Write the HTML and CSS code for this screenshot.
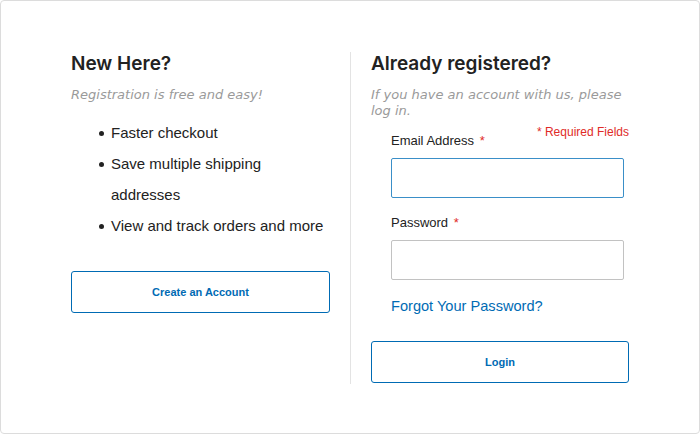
FILE: index.html
```html
<!DOCTYPE html>
<html>
<head>
<meta charset="utf-8">
<link rel="stylesheet" href="styles.css">
</head>
<body>
<div class="frame">
  <div class="col col-left">
    <h2 class="title">New Here?</h2>
    <p class="sub">Registration is free and easy!</p>
    <ul class="perks">
      <li>Faster checkout</li>
      <li>Save multiple shipping addresses</li>
      <li>View and track orders and more</li>
    </ul>
    <button class="btn btn-create">Create an Account</button>
  </div>
  <div class="divider"></div>
  <div class="col col-right">
    <h2 class="title">Already registered?</h2>
    <p class="sub">If you have an account with us, please log in.</p>
    <div class="form">
      <div class="req">* Required Fields</div>
      <label class="label">Email Address <span class="star">*</span></label>
      <input class="input input-focus" type="text">
      <label class="label label-pw">Password <span class="star">*</span></label>
      <input class="input" type="password">
      <a class="forgot" href="#">Forgot Your Password?</a>
    </div>
    <button class="btn btn-login">Login</button>
  </div>
</div>
</body>
</html>
```

FILE: styles.css
```css
* { box-sizing: border-box; }
html, body { margin: 0; padding: 0; background: #fff; }
body { font-family: "Liberation Sans", Arial, sans-serif; color: #333; }
.frame {
  width: 700px;
  height: 434px;
  border: 1px solid #dcdcdc;
  border-radius: 4px;
  display: flex;
  padding: 51px 0 0 70px;
}
.col { display: flex; flex-direction: column; }
.col-left { width: 259px; }
.col-right { width: 258px; }
.divider {
  width: 1px;
  height: 332px;
  background: #e3e3e3;
  margin: 0 20px;
}
.title {
  font-family: Inter, "Open Sans", sans-serif;
  font-weight: 600;
  font-size: 19px;
  line-height: 24px;
  color: #222;
  margin: 0;
}
.sub {
  font-family: "DejaVu Sans", sans-serif;
  font-style: italic;
  font-size: 13px;
  line-height: 16px;
  color: #9a9a9a;
  margin: 11px 0 0;
}
.perks {
  list-style: none;
  margin: 14px 0 0;
  padding: 0 0 0 28px;
  font-size: 15px;
  line-height: 31px;
  color: #222;
}
.perks li { display: flex; }
.perks li::before {
  content: "";
  flex: none;
  width: 5px;
  height: 5px;
  border-radius: 50%;
  background: #222;
  margin: 14px 7px 0 0;
}
.btn {
  font-family: "Liberation Sans", Arial, sans-serif;
  background: #fff;
  border: 1px solid #006bb4;
  border-radius: 3px;
  color: #006bb4;
  font-weight: bold;
  font-size: 11px;
  height: 42px;
  width: 100%;
}
.btn-create { margin-top: 30px; }
.form {
  display: flex;
  flex-direction: column;
  padding-left: 20px;
  margin-top: 6px;
}
.req {
  align-self: flex-end;
  color: #e02b27;
  font-size: 12px;
  line-height: 14px;
}
.label {
  font-size: 13px;
  line-height: 16px;
  color: #222;
  margin-top: -6px;
}
.label-pw { margin-top: 17px; }
.star { color: #e02b27; margin-left: 2px; }
.input {
  margin-top: 9px;
  width: 233px;
  height: 40px;
  border: 1px solid #c2c2c2;
  border-radius: 2px;
  background: #fff;
  outline: none;
}
.input-focus { border-color: #3a8fc8; }
.forgot {
  color: #006bb4;
  text-decoration: none;
  font-size: 14.6px;
  line-height: 18px;
  margin-top: 17px;
}
.btn-login { margin-top: 26px; }
```
